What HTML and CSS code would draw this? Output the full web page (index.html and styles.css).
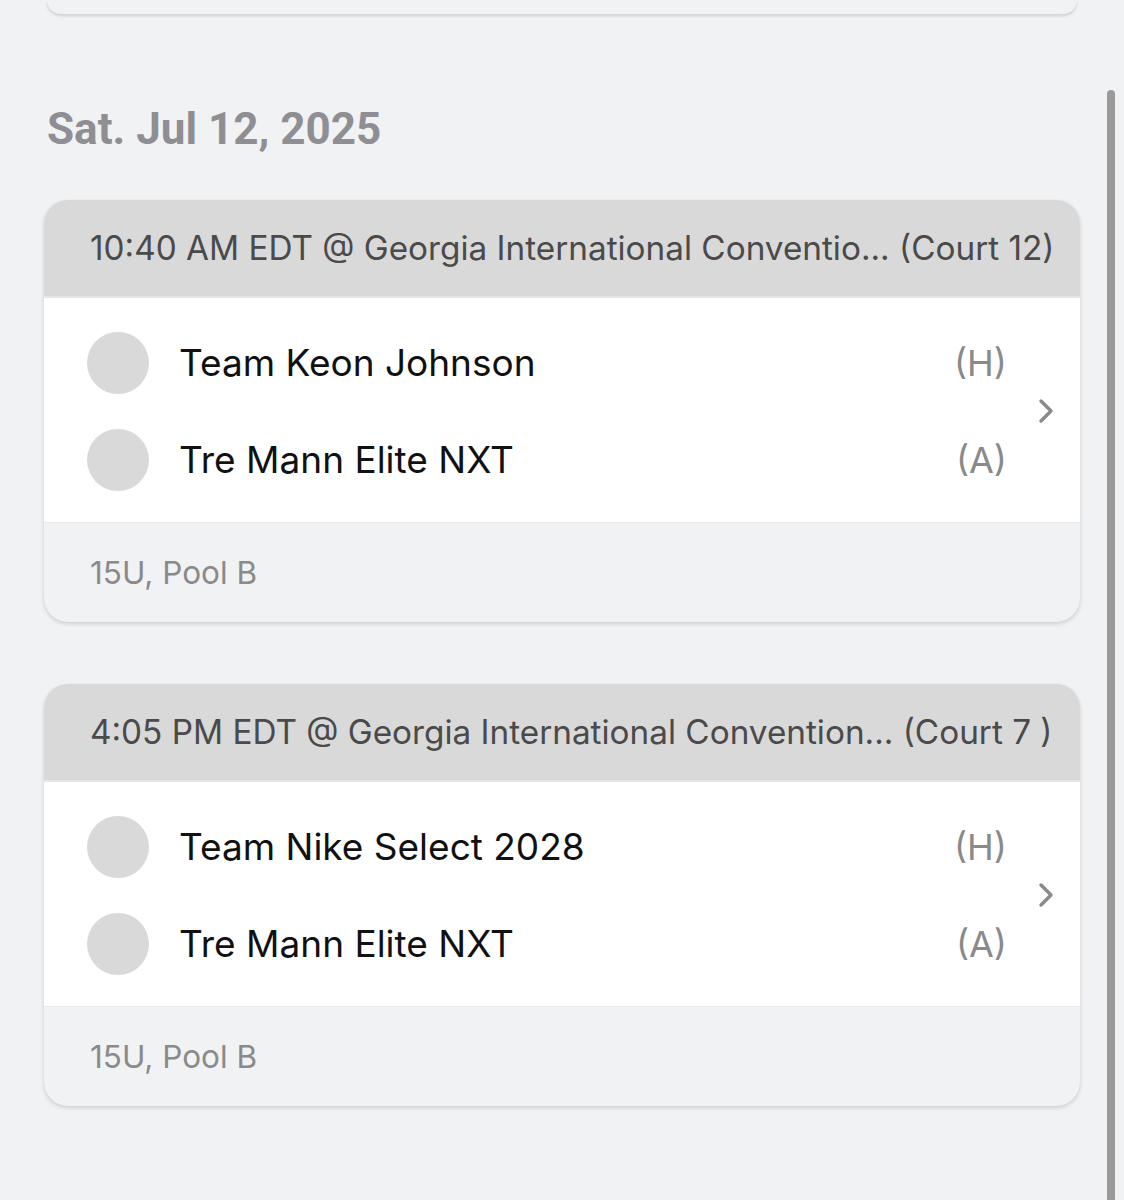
FILE: index.html
```html
<!DOCTYPE html>
<html lang="en">
<head>
<meta charset="utf-8">
<title>Schedule</title>
<link rel="stylesheet" href="styles.css">
</head>
<body>
<div class="page">
  <div class="card-tail"></div>

  <h2 class="day">Sat. Jul 12, 2025</h2>

  <div class="game">
    <div class="game-head">10:40 AM EDT @ Georgia International Conventio... (Court 12)</div>
    <div class="game-body">
      <div class="teams">
        <div class="team">
          <span class="logo"></span>
          <span class="name">Team Keon Johnson</span>
          <span class="side">(H)</span>
        </div>
        <div class="team">
          <span class="logo"></span>
          <span class="name">Tre Mann Elite NXT</span>
          <span class="side">(A)</span>
        </div>
      </div>
      <svg class="chev" viewBox="0 0 16 26" width="16" height="26"><path d="M3 3 L13 13 L3 23" fill="none" stroke="#8a8a8a" stroke-width="3.4" stroke-linecap="round" stroke-linejoin="round"/></svg>
    </div>
    <div class="game-foot">15U, Pool B</div>
  </div>

  <div class="game">
    <div class="game-head">4:05 PM EDT @ Georgia International Convention... (Court 7 )</div>
    <div class="game-body">
      <div class="teams">
        <div class="team">
          <span class="logo"></span>
          <span class="name">Team Nike Select 2028</span>
          <span class="side">(H)</span>
        </div>
        <div class="team">
          <span class="logo"></span>
          <span class="name">Tre Mann Elite NXT</span>
          <span class="side">(A)</span>
        </div>
      </div>
      <svg class="chev" viewBox="0 0 16 26" width="16" height="26"><path d="M3 3 L13 13 L3 23" fill="none" stroke="#8a8a8a" stroke-width="3.4" stroke-linecap="round" stroke-linejoin="round"/></svg>
    </div>
    <div class="game-foot">15U, Pool B</div>
  </div>
</div>
<div class="scroll-indicator"></div>
</body>
</html>
```

FILE: styles.css
```css
html, body {
  margin: 0;
  padding: 0;
  background: #f1f2f4;
}

body {
  font-family: Inter, "Noto Sans", sans-serif;
  color: #111;
  overflow: hidden;
  height: 1200px;
}

.page {
  width: 1036px;
  padding-left: 44px;
  display: flex;
  flex-direction: column;
}

.card-tail {
  height: 14px;
  margin: 0 3px;
  background: #f1f2f4;
  border-radius: 0 0 24px 24px;
  box-shadow: 0 2px 3px rgba(0, 0, 0, 0.14);
}

.day {
  margin: 88px 0 44px 3px;
  font-family: Roboto, sans-serif;
  font-weight: 700;
  font-size: 44px;
  line-height: 54px;
  color: #8e8e93;
}

.game {
  border-radius: 24px;
  overflow: hidden;
  background: #f1f2f4;
  box-shadow: 0 2px 4px rgba(0, 0, 0, 0.14), 0 0 1px rgba(0, 0, 0, 0.08);
  margin-bottom: 62px;
}

.game-head {
  height: 98px;
  display: flex;
  align-items: center;
  padding-left: 46px;
  background: #d9d9d9;
  color: #4a4a4a;
  font-size: 33.3px;
  white-space: nowrap;
  border-bottom: 2px solid #e6e6e6;
  box-sizing: border-box;
}

.game-body {
  background: #fff;
  display: flex;
  align-items: center;
  padding: 16px 26px 14px 43px;
  gap: 33px;
}

.teams {
  flex: 1;
  display: flex;
  flex-direction: column;
}

.team {
  height: 97px;
  display: flex;
  align-items: center;
}

.logo {
  width: 62px;
  height: 62px;
  border-radius: 50%;
  background: #d9d9d9;
  flex: none;
}

.name {
  flex: 1;
  margin-left: 30px;
  font-size: 37px;
  color: #111;
}

.side {
  font-size: 36px;
  color: #8a8a8a;
  margin-right: -2px;
}

.chev {
  flex: none;
}

.game-foot {
  height: 100px;
  display: flex;
  align-items: center;
  padding-left: 46px;
  font-size: 31.5px;
  color: #8a8a8a;
  border-top: 1px solid #e9e9eb;
  box-sizing: border-box;
}

.scroll-indicator {
  position: absolute;
  left: 1107px;
  top: 90px;
  width: 8px;
  height: 1120px;
  background: #9a9a9a;
  border-radius: 4px;
}
```
